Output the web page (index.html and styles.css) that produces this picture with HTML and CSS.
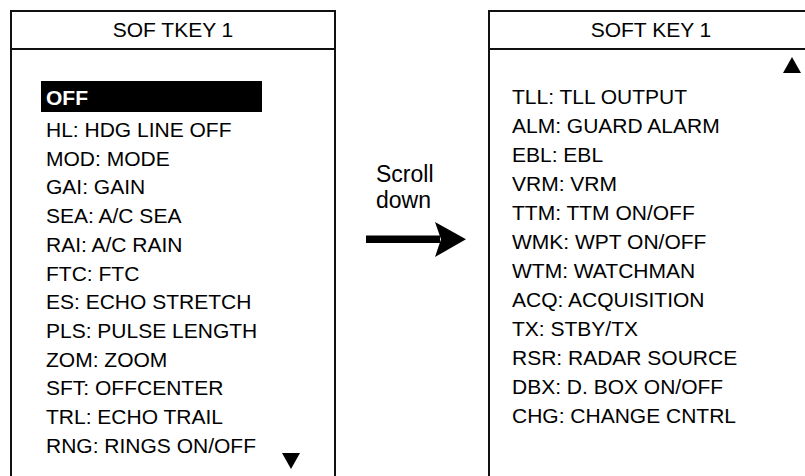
FILE: index.html
```html
<!DOCTYPE html>
<html lang="en">
<head>
<meta charset="utf-8">
<title>Soft key scroll</title>
<link rel="stylesheet" href="styles.css">
</head>
<body>
<div class="figure">
  <section class="panel panel-left">
    <header class="panel-title">SOF TKEY 1</header>
    <ul class="menu menu-left">
      <li class="item selected">OFF</li>
      <li class="item">HL: HDG LINE OFF</li>
      <li class="item">MOD: MODE</li>
      <li class="item">GAI: GAIN</li>
      <li class="item">SEA: A/C SEA</li>
      <li class="item">RAI: A/C RAIN</li>
      <li class="item">FTC: FTC</li>
      <li class="item">ES: ECHO STRETCH</li>
      <li class="item">PLS: PULSE LENGTH</li>
      <li class="item">ZOM: ZOOM</li>
      <li class="item">SFT: OFFCENTER</li>
      <li class="item">TRL: ECHO TRAIL</li>
      <li class="item">RNG: RINGS ON/OFF</li>
    </ul>
    <svg class="scroll-mark mark-down" width="18" height="16" viewBox="0 0 18 16"><polygon points="0,0 18,0 9,16" fill="#000"/></svg>
  </section>

  <div class="transition">
    <div class="caption">Scroll<br>down</div>
    <svg class="arrow" width="100" height="36" viewBox="0 0 100 36">
      <rect x="0" y="13.5" width="74" height="7.5" fill="#000"/>
      <polygon points="69,0 100,17.25 69,35 75,17.25" fill="#000"/>
    </svg>
  </div>

  <section class="panel panel-right">
    <header class="panel-title">SOFT KEY 1</header>
    <ul class="menu menu-right">
      <li class="item">TLL: TLL OUTPUT</li>
      <li class="item">ALM: GUARD ALARM</li>
      <li class="item">EBL: EBL</li>
      <li class="item">VRM: VRM</li>
      <li class="item">TTM: TTM ON/OFF</li>
      <li class="item">WMK: WPT ON/OFF</li>
      <li class="item">WTM: WATCHMAN</li>
      <li class="item">ACQ: ACQUISITION</li>
      <li class="item">TX: STBY/TX</li>
      <li class="item">RSR: RADAR SOURCE</li>
      <li class="item">DBX: D. BOX ON/OFF</li>
      <li class="item">CHG: CHANGE CNTRL</li>
    </ul>
    <svg class="scroll-mark mark-up" width="18" height="16" viewBox="0 0 18 16"><polygon points="9,0 18,16 0,16" fill="#000"/></svg>
  </section>
</div>
</body>
</html>
```

FILE: styles.css
```css
html, body {
  margin: 0;
  padding: 0;
  background: #fff;
}

body {
  width: 805px;
  height: 476px;
  overflow: hidden;
  font-family: "Liberation Sans", Arial, sans-serif;
  color: #000;
}

.figure {
  display: flex;
  align-items: flex-start;
  padding: 10px 0 0 10px;
}

.panel {
  position: relative;
  flex: 0 0 auto;
  width: 326px;
  height: 480px;
  box-sizing: border-box;
  border: 2px solid #111;
  border-bottom: none;
}

.panel-title {
  height: 36px;
  line-height: 36px;
  text-align: center;
  font-size: 21px;
  border-bottom: 2px solid #111;
}

.menu {
  list-style: none;
  margin: 0;
  padding: 0;
  font-size: 21px;
}

.menu-left {
  padding: 31px 0 0 29px;
}

.menu-left .item {
  line-height: 28.7px;
  padding-left: 5px;
}

.menu-left .item.selected {
  width: 221px;
  box-sizing: border-box;
  padding-top: 2px;
  line-height: 29px;
  margin-bottom: 4px;
  background: #000;
  color: #fff;
  font-weight: bold;
}

.menu-right {
  padding: 32px 0 0 22px;
}

.menu-right .item {
  line-height: 29px;
}

.transition {
  flex: 0 0 152px;
  width: 152px;
  display: flex;
  flex-direction: column;
}

.caption {
  margin: 151px 0 0 40px;
  font-size: 23px;
  line-height: 26px;
}

.arrow {
  display: block;
  margin: 9px 0 0 30px;
}

.scroll-mark {
  position: absolute;
  display: block;
}

.mark-down {
  left: 270px;
  top: 441px;
}

.mark-up {
  left: 293px;
  top: 45px;
}
```
